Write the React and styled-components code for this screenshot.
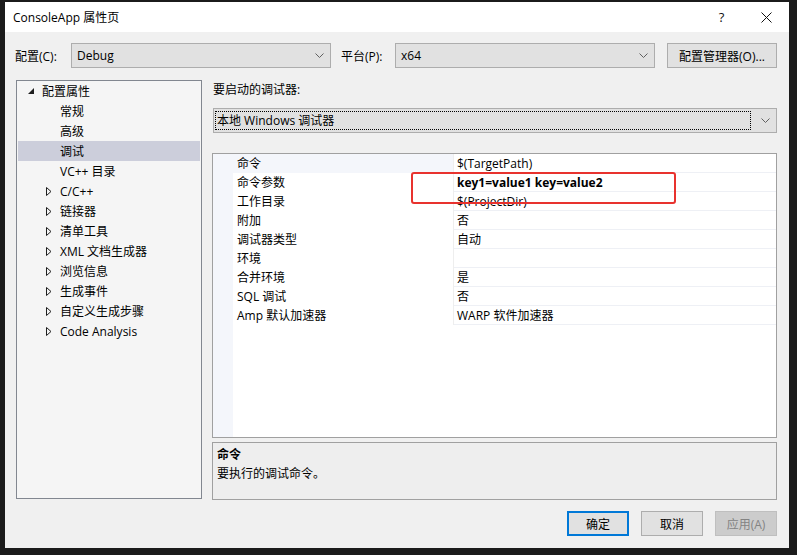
import React from "react";
import styled, { createGlobalStyle } from "styled-components";

const GlobalStyle = createGlobalStyle`
  html, body {
    margin: 0;
    padding: 0;
    background: #1b1b1b;
    width: 797px;
    height: 555px;
    overflow: hidden;
  }
  body {
    font-family: "Open Sans", "Noto Sans CJK SC", sans-serif;
    font-size: 12px;
    color: #000;
  }
`;

const Desktop = styled.div`
  width: 797px;
  height: 555px;
  padding: 2px 0 0 5px;
  box-sizing: border-box;
`;

const Window = styled.div`
  width: 784px;
  height: 546px;
  background: #f0f0f0;
  display: flex;
  flex-direction: column;
`;

const TitleBar = styled.div`
  height: 30px;
  background: #fff;
  display: flex;
  align-items: center;
  padding-left: 8px;
`;

const Title = styled.div`
  flex: 1;
  font-size: 12px;
`;

const TitleButton = styled.div`
  width: 45px;
  height: 30px;
  display: flex;
  align-items: center;
  justify-content: center;
  font-size: 13px;
  color: #111;
`;

const Body = styled.div`
  flex: 1;
  display: flex;
  flex-direction: column;
  padding: 11px 12px 12px 10px;
`;

const TopRow = styled.div`
  display: flex;
  align-items: center;
  height: 25px;
`;

const Label = styled.div`
  width: ${(p) => p.w}px;
  flex: none;
`;

const Select = styled.div`
  width: ${(p) => (p.w ? p.w + "px" : "auto")};
  flex: ${(p) => (p.w ? "none" : 1)};
  height: 25px;
  box-sizing: border-box;
  border: 1px solid #adadad;
  background: #e1e1e1;
  display: flex;
  align-items: center;
  padding: 0 6px 0 ${(p) => (p.pl !== undefined ? p.pl : 3)}px;
  margin-right: ${(p) => p.mr || 0}px;
`;

const SelectText = styled.div`
  flex: 1;
  height: 19px;
  line-height: 18px;
  padding-left: 1px;
  box-sizing: border-box;
  border: 1px ${(p) => (p.focus ? "dotted #000" : "solid transparent")};
  margin-right: ${(p) => (p.focus ? 10 : 8)}px;
`;

const Button = styled.div`
  width: ${(p) => p.w || 62}px;
  height: 25px;
  flex: none;
  box-sizing: border-box;
  border: ${(p) => (p.primary ? "2px solid #0078d7" : p.disabled ? "1px solid #bfbfbf" : "1px solid #adadad")};
  background: ${(p) => (p.disabled ? "#cccccc" : "#e1e1e1")};
  color: ${(p) => (p.disabled ? "#838383" : "#000")};
  display: flex;
  align-items: center;
  justify-content: center;
`;

const Main = styled.div`
  display: flex;
  gap: 10px;
  margin-top: 12px;
  padding-left: 1px;
`;

const Tree = styled.div`
  width: 186px;
  height: 419px;
  box-sizing: border-box;
  border: 1px solid #828790;
  background: #f5f5f5;
  padding: 0 1px;
`;

const TreeRow = styled.div`
  height: 20px;
  display: flex;
  align-items: center;
  padding-left: ${(p) => p.indent}px;
  background: ${(p) => (p.selected ? "#cccedb" : "transparent")};
`;

const Arrow = styled.div`
  width: 14px;
  display: flex;
  align-items: center;
`;

const RightCol = styled.div`
  flex: 1;
  display: flex;
  flex-direction: column;
`;

const SectionLabel = styled.div`
  height: 16px;
  line-height: 16px;
  margin-top: 2px;
  margin-left: 1px;
`;

const DebuggerRow = styled.div`
  margin-top: 10px;
  display: flex;
  padding-left: 1px;
`;

const Grid = styled.div`
  position: relative;
  margin-top: 20px;
  height: 285px;
  box-sizing: border-box;
  border: 1px solid #a0a0a0;
  background: #fff;
  display: flex;
`;

const Gutter = styled.div`
  width: 20px;
  background: #f4f6fb;
`;

const Rows = styled.div`
  flex: 1;
`;

const Row = styled.div`
  display: grid;
  grid-template-columns: 221px 1fr;
  height: 19px;
  border-bottom: 1px solid #eef0f5;
  box-sizing: border-box;
`;

const NameCell = styled.div`
  padding-left: 4px;
  line-height: 19px;
  border-right: 1px solid #eeeeee;
  background: ${(p) => (p.active ? "#f4f6fb" : "#fff")};
  white-space: nowrap;
`;

const ValueCell = styled.div`
  padding-left: 3px;
  line-height: 19px;
  font-weight: ${(p) => (p.bold ? 700 : 400)};
  white-space: nowrap;
`;

const Highlight = styled.div`
  position: absolute;
  left: 198px;
  top: 18px;
  width: 265px;
  height: 32px;
  box-sizing: border-box;
  border: 2px solid #e8322e;
  border-radius: 3px;
`;

const Desc = styled.div`
  margin-top: 4px;
  height: 58px;
  box-sizing: border-box;
  border: 1px solid #a0a0a0;
  background: #eeeeee;
  padding: 2px 4px;
`;

const DescTitle = styled.div`
  font-weight: 700;
  line-height: 19px;
`;

const DescText = styled.div`
  line-height: 19px;
`;

const Footer = styled.div`
  margin-top: auto;
  display: flex;
  justify-content: flex-end;
  gap: 12px;
`;

const Chevron = () => (
  <svg width="9" height="5" viewBox="0 0 9 5">
    <path d="M0.5 0.5 L4.5 4.5 L8.5 0.5" fill="none" stroke="#606060" strokeWidth="1" />
  </svg>
);

const Expanded = () => (
  <svg width="6" height="6" viewBox="0 0 6 6">
    <path d="M6 0 L6 6 L0 6 Z" fill="#1e1e1e" />
  </svg>
);

const Collapsed = () => (
  <svg width="6" height="9" viewBox="0 0 6 9">
    <path d="M0.5 0.5 L5 4.5 L0.5 8.5 Z" fill="none" stroke="#1e1e1e" strokeWidth="1" />
  </svg>
);

const treeItems = [
  { label: "配置属性", level: 0, kind: "open" },
  { label: "常规", level: 1 },
  { label: "高级", level: 1 },
  { label: "调试", level: 1, selected: true },
  { label: "VC++ 目录", level: 1 },
  { label: "C/C++", level: 1, kind: "closed" },
  { label: "链接器", level: 1, kind: "closed" },
  { label: "清单工具", level: 1, kind: "closed" },
  { label: "XML 文档生成器", level: 1, kind: "closed" },
  { label: "浏览信息", level: 1, kind: "closed" },
  { label: "生成事件", level: 1, kind: "closed" },
  { label: "自定义生成步骤", level: 1, kind: "closed" },
  { label: "Code Analysis", level: 1, kind: "closed" },
];

const props = [
  ["命令", "$(TargetPath)"],
  ["命令参数", "key1=value1 key=value2", true],
  ["工作目录", "$(ProjectDir)"],
  ["附加", "否"],
  ["调试器类型", "自动"],
  ["环境", ""],
  ["合并环境", "是"],
  ["SQL 调试", "否"],
  ["Amp 默认加速器", "WARP 软件加速器"],
];

export default function App() {
  return (
    <Desktop>
      <GlobalStyle />
      <Window>
        <TitleBar>
          <Title>ConsoleApp 属性页</Title>
          <TitleButton>?</TitleButton>
          <TitleButton>
            <svg width="11" height="11" viewBox="0 0 11 11">
              <path d="M0.5 0.5 L10.5 10.5 M10.5 0.5 L0.5 10.5" stroke="#111" strokeWidth="1" />
            </svg>
          </TitleButton>
        </TitleBar>
        <Body>
          <TopRow>
            <Label w={56}>配置(C):</Label>
            <Select w={260} mr={10}>
              <SelectText>Debug</SelectText>
              <Chevron />
            </Select>
            <Label w={54}>平台(P):</Label>
            <Select w={260} mr={12}>
              <SelectText>x64</SelectText>
              <Chevron />
            </Select>
            <Button w={110}>配置管理器(O)...</Button>
          </TopRow>
          <Main>
            <Tree>
              {treeItems.map((it) => (
                <TreeRow key={it.label} indent={it.level === 0 ? 10 : it.kind ? 28 : 42} selected={it.selected}>
                  {it.kind && (
                    <Arrow>{it.kind === "open" ? <Expanded /> : <Collapsed />}</Arrow>
                  )}
                  {it.label}
                </TreeRow>
              ))}
            </Tree>
            <RightCol>
              <SectionLabel>要启动的调试器:</SectionLabel>
              <DebuggerRow>
                <Select pl={1}>
                  <SelectText focus>本地 Windows 调试器</SelectText>
                  <Chevron />
                </Select>
              </DebuggerRow>
              <Grid>
                <Gutter />
                <Rows>
                  {props.map(([name, value, bold], i) => (
                    <Row key={name}>
                      <NameCell active={i === 0}>{name}</NameCell>
                      <ValueCell bold={bold}>{value}</ValueCell>
                    </Row>
                  ))}
                </Rows>
                <Highlight />
              </Grid>
              <Desc>
                <DescTitle>命令</DescTitle>
                <DescText>要执行的调试命令。</DescText>
              </Desc>
            </RightCol>
          </Main>
          <Footer>
            <Button primary>确定</Button>
            <Button>取消</Button>
            <Button disabled>应用(A)</Button>
          </Footer>
        </Body>
      </Window>
    </Desktop>
  );
}
